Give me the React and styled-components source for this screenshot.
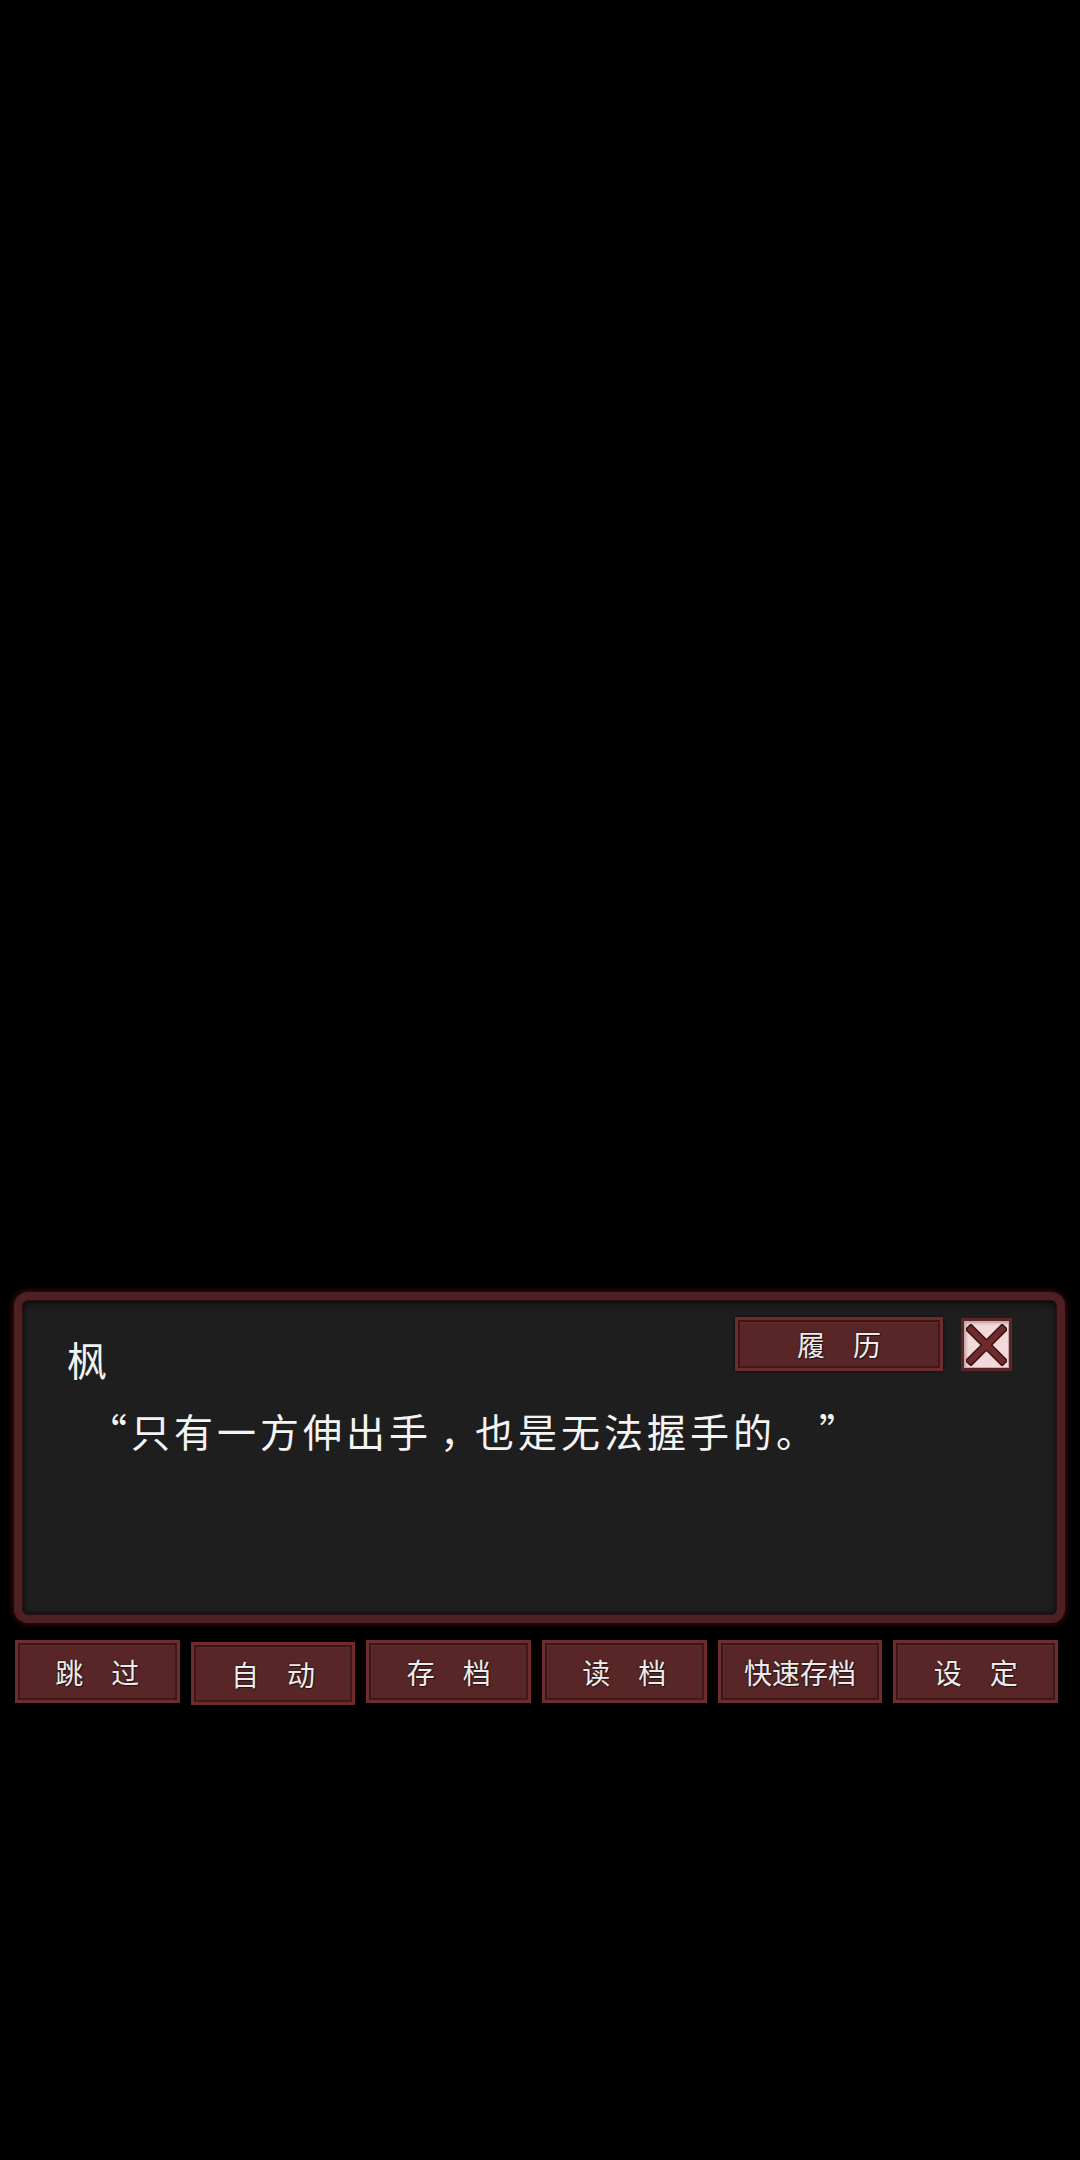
import styled, { createGlobalStyle } from "styled-components";

const GlobalStyle = createGlobalStyle`
  html, body {
    margin: 0;
    padding: 0;
    background: #000;
  }
  body {
    font-family: "Noto Sans CJK SC", "Noto Sans", sans-serif;
  }
`;

const Screen = styled.div`
  width: 1080px;
  height: 2160px;
  background: #000;
  display: flex;
  flex-direction: column;
`;

const Scene = styled.div`
  height: 1292px;
  flex-shrink: 0;
`;

const Dialog = styled.div`
  margin: 0 15px 0 14px;
  height: 331px;
  box-sizing: border-box;
  border: 8px solid #4f2022;
  border-radius: 14px;
  background: #1e1e1e;
  box-shadow: 0 0 6px 1px rgba(110, 30, 32, 0.55),
    inset 0 0 0 1px #2a1011, inset 0 3px 6px rgba(0, 0, 0, 0.7),
    inset 0 -2px 4px rgba(0, 0, 0, 0.5);
  display: flex;
  flex-direction: column;
`;

const Header = styled.div`
  display: flex;
  justify-content: space-between;
  align-items: flex-start;
  padding: 17px 45px 0 45px;
`;

const Name = styled.div`
  margin-top: 22px;
  font-size: 40px;
  line-height: 40px;
  color: #f2f2f2;
`;

const Controls = styled.div`
  display: flex;
  gap: 18px;
`;

const FrameButton = styled.button`
  box-sizing: border-box;
  width: ${(p) => p.$w}px;
  height: ${(p) => p.$h}px;
  padding: 0;
  border: 3px solid #6e2c2e;
  background: #582627;
  box-shadow: inset 2px 2px 0 #3a1617, inset -2px -2px 0 #3f1819,
    inset 3px 3px 0 #64292b, 0 0 3px rgba(0, 0, 0, 0.8);
  color: #ececec;
  font-family: "Noto Sans CJK SC", sans-serif;
  font-size: 28px;
  line-height: 1;
  text-shadow: 1px 1px 0 #2a1213, 0 0 2px rgba(0, 0, 0, 0.7);
  display: flex;
  align-items: center;
  justify-content: center;
  margin-top: ${(p) => p.$drop || 0}px;
`;

const CloseButton = styled.button`
  box-sizing: border-box;
  width: 51px;
  height: 53px;
  margin-top: 1px;
  padding: 2px;
  border: 3px solid #5d2527;
  background: #f3dada;
  box-shadow: inset 0 0 0 1px #c9aaaa, inset 2px 2px 3px rgba(90, 40, 40, 0.35);
  display: flex;
  align-items: center;
  justify-content: center;
`;

const Line = styled.div`
  margin-top: 31px;
  padding-left: 66px;
  font-size: 39px;
  line-height: 40px;
  letter-spacing: 4px;
  color: #f4f4f4;
  text-spacing-trim: space-all;
`;

const Comma = styled.span`
  padding-left: 8px;
  letter-spacing: -4px;
`;

const ButtonBar = styled.div`
  margin: 17px 22px 0 15px;
  display: grid;
  grid-template-columns: repeat(6, 1fr);
  gap: 11px;
`;

const CloseIcon = () => (
  <svg width="42" height="42" viewBox="0 0 42 42">
    <g strokeLinecap="square">
      <path d="M5 5 L37 37 M37 5 L5 37" stroke="#3a1415" strokeWidth="9" />
      <path d="M5 5 L37 37 M37 5 L5 37" stroke="#6e2a2c" strokeWidth="6" />
    </g>
  </svg>
);

const menu = [
  { label: "跳　过" },
  { label: "自　动", drop: 2 },
  { label: "存　档" },
  { label: "读　档" },
  { label: "快速存档" },
  { label: "设　定" },
];

export default function App() {
  return (
    <>
      <GlobalStyle />
      <Screen>
        <Scene />
        <Dialog>
          <Header>
            <Name>枫</Name>
            <Controls>
              <FrameButton $w={208} $h={54}>
                履　历
              </FrameButton>
              <CloseButton>
                <CloseIcon />
              </CloseButton>
            </Controls>
          </Header>
          <Line>
            “只有一方伸出手<Comma>，</Comma>也是无法握手的。”
          </Line>
        </Dialog>
        <ButtonBar>
          {menu.map((m) => (
            <FrameButton key={m.label} $h={63} $drop={m.drop} style={{ width: "100%" }}>
              {m.label}
            </FrameButton>
          ))}
        </ButtonBar>
      </Screen>
    </>
  );
}
